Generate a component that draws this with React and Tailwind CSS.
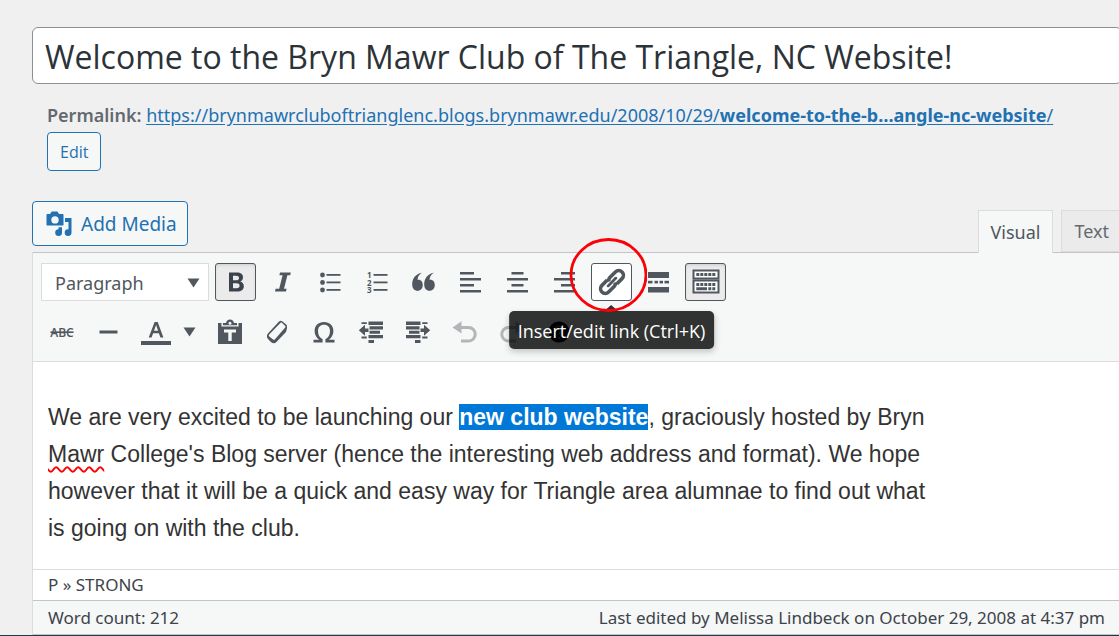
import React from "react";

const ui = "font-['Noto_Sans','Open_Sans',sans-serif]";
const toolBase = "flex h-[38px] w-[41px] shrink-0 items-center justify-center rounded-[3px] border";

function Tool({ label, variant = "plain", children }) {
  const look =
    variant === "pressed"
      ? "border-[#50575e] bg-[#ebebec] shadow-[inset_0_2px_5px_-3px_rgba(0,0,0,0.3)]"
      : variant === "hover"
        ? "border-[#50575e] bg-white"
        : "border-transparent";
  return (
    <button type="button" aria-label={label} aria-pressed={variant === "pressed"} className={`${toolBase} ${look}`}>
      {children}
    </button>
  );
}

function Icon({ children, className = "" }) {
  return (
    <svg viewBox="0 0 30 30" aria-hidden="true" className={`h-[30px] w-[30px] shrink-0 ${className}`} fill="currentColor">
      {children}
    </svg>
  );
}

const BoldIcon = () => (
  <Icon className="text-[#3c434a]">
    <path fillRule="evenodd" d="M8 5.500H15.500C20 5.500 22 7.300 22 10.300C22 12.500 20.900 14 19 14.600C21.500 15.100 22.800 16.900 22.800 19.200C22.800 22.700 20.200 24.500 16.200 24.500H8ZM12 8.700V13.200H15C17 13.200 18 12.400 18 10.900C18 9.400 17 8.700 15 8.700ZM12 16.300V21.300H15.500C17.600 21.300 18.600 20.400 18.600 18.800C18.600 17.100 17.600 16.300 15.400 16.300Z" />
  </Icon>
);
const ItalicIcon = () => (
  <Icon>
    <path d="M12 5.500H22.800L22.200 8.300H19.400L16 21.700H18.600L18 24.500H7L7.600 21.700H11.200L14.600 8.300H11.400Z" />
  </Icon>
);
const BulletIcon = () => (
  <Icon>
    {[8, 15.5, 23].map((y) => (
      <g key={y}>
        <circle cx="7.500" cy={y} r="2.4" />
        <rect x="11.500" y={y - 1} width="14" height="1.800" />
      </g>
    ))}
  </Icon>
);
const NumberIcon = () => (
  <Icon>
    {[8, 15.5, 23].map((y, i) => (
      <g key={y}>
        <text x="5" y={y + 3} fontSize="8" fontWeight="700" fontFamily="Open Sans, sans-serif">
          {i + 1}
        </text>
        <rect x="11.500" y={y - 1} width="14" height="1.800" />
      </g>
    ))}
  </Icon>
);
const QuoteIcon = () => (
  <Icon>
    <path d="M12.800 5.800C9.800 7.600 8.600 10 8.600 13C11.700 12.200 13.800 15 13.800 18C13.800 21.300 11.600 23.800 8.600 23.800C5.200 23.800 3.200 21.200 3.200 17.300C3.200 11.500 6.600 7 12.800 5.800Z" />
    <path transform="translate(12 0)" d="M12.800 5.800C9.800 7.600 8.600 10 8.600 13C11.700 12.200 13.800 15 13.800 18C13.800 21.300 11.600 23.800 8.600 23.800C5.200 23.800 3.200 21.200 3.200 17.300C3.200 11.500 6.600 7 12.800 5.800Z" />
  </Icon>
);
function AlignIcon({ x, width }) {
  return (
    <Icon>
      <rect x={x} y="5" width={width} height="2.500" />
      <rect x="4" y="11" width="21" height="2.500" />
      <rect x={x} y="17" width={width} height="2.500" />
      <rect x="4" y="23" width="21" height="2.500" />
    </Icon>
  );
}
const LinkIcon = () => (
  <Icon>
    <g transform="rotate(-45 15 15)" fill="none" stroke="currentColor" strokeWidth="3.600">
      <path d="M13 10.300H5.500A4.700 4.700 0 0 0 5.500 19.700H13A4.700 4.700 0 0 0 17 17.500" />
      <path d="M17 19.700H24.500A4.700 4.700 0 0 0 24.500 10.300H17A4.700 4.700 0 0 0 13 12.500" />
      <path d="M9.500 15H20.500" strokeWidth="2.800" strokeLinecap="round" />
    </g>
  </Icon>
);
const MoreIcon = () => (
  <Icon>
    <rect x="4" y="5" width="21" height="6" />
    <rect x="4" y="13.800" width="4.500" height="2.600" />
    <rect x="10.500" y="13.800" width="3.500" height="2.600" />
    <rect x="15.500" y="13.800" width="3.500" height="2.600" />
    <rect x="20.500" y="13.800" width="4.500" height="2.600" />
    <rect x="4" y="20" width="21" height="5.500" />
  </Icon>
);
const KeyboardIcon = () => (
  <Icon>
    <rect x="2.500" y="3.500" width="25" height="8" fill="white" stroke="currentColor" strokeWidth="2" />
    <rect x="2.500" y="13.500" width="25" height="12" fill="white" stroke="currentColor" strokeWidth="2" />
    {[5, 9, 13, 17, 21].map((x) => (
      <rect key={x} x={x + 0.3} y="6" width="3" height="3" />
    ))}
    {[5, 9, 13, 17, 21].map((x) => (
      <rect key={x} x={x + 0.3} y="16" width="3" height="3" />
    ))}
    <path d="M5.300 20.300H16V23.300H5.300ZM17.300 20.300H20.300V23.300H17.300ZM21.300 20.300H24.300V23.300H21.300Z" />
  </Icon>
);
const StrikeIcon = () => (
  <Icon>
    <text x="15" y="19.500" textAnchor="middle" fontSize="12" fontWeight="600" fontFamily="Open Sans, sans-serif">
      ABC
    </text>
    <rect x="3.500" y="14.400" width="23" height="1.600" />
  </Icon>
);
const RuleIcon = () => (
  <Icon>
    <rect x="5.500" y="13.500" width="18" height="3" />
  </Icon>
);
const ColorIcon = () => (
  <Icon>
    <path fillRule="evenodd" d="M13.600 5H16.700L22.400 20.500H19.400L17.900 16.300H12.100L10.600 20.500H7.700ZM15.100 7.900L13 13.800H17.100Z" />
    <rect x="0" y="24" width="30" height="4" />
  </Icon>
);
const PasteIcon = () => (
  <Icon>
    <path d="M3 6H6.500V9.500H23.500V6H27V27H3Z" />
    <path fillRule="evenodd" d="M8 8.300V6H11C11.400 3.900 12.900 2.600 15 2.600C17.100 2.600 18.600 3.900 19 6H22V8.300ZM15 4.700A1.500 1.500 0 1 0 15 7.700A1.500 1.500 0 1 0 15 4.700Z" />
    <path fill="#f6f7f7" d="M9 12.500H21V15.500H16.700V24H13.300V15.500H9Z" />
  </Icon>
);
const EraserIcon = () => (
  <Icon>
    <path fillRule="evenodd" d="M17 4.500C18 3.500 19.200 3.500 20.200 4.300L24.200 7.500C25.200 8.300 25.300 10.500 24.700 12.500L24 15L14.200 25.300C12.800 26.800 10.500 26.500 9.200 25.200L6 22C4.700 20.600 4.600 18.300 5.700 16.800ZM18.600 5.700L7.200 17.600C6.600 18.300 6.700 19 7.300 19.600L11 22.500C11.600 23 12.400 22.900 13 22.300L23.200 10.600C23.700 10 23.600 9.300 23 8.800L19.900 5.800C19.500 5.400 19 5.300 18.600 5.700Z" />
  </Icon>
);
const OmegaIcon = () => (
  <Icon>
    <path d="M4.500 22.800H10.300C7.500 20.800 5.600 17.900 5.600 14C5.600 8.500 9.300 5 15 5C20.700 5 24.400 8.500 24.400 14C24.400 17.900 22.500 20.800 19.700 22.800H25.500V25.500H16.400V22.300C19.500 20.700 21 17.900 21 14C21 10.100 18.900 7.700 15 7.700C11.100 7.700 9 10.100 9 14C9 17.900 10.500 20.700 13.600 22.300V25.500H4.500Z" />
  </Icon>
);
function IndentIcon({ flip = false }) {
  return (
    <Icon className={flip ? "-scale-x-100" : ""}>
      <path d="M12.500 4.600H27V8H12.500ZM13.500 9.300H27V12.400H13.500ZM13.500 13.700H24V16.800H13.500ZM12.500 18.100H27V21.300H12.500ZM12.500 23H18V26H12.500ZM5.500 5.200H10.800V7H5.500ZM5.500 19.600H10.800V21.400H5.500Z" />
      <path d="M2.800 13.200L9 7.800V11.500H12.500V15H9V18.700Z" />
    </Icon>
  );
}
function UndoIcon({ flip = false }) {
  return (
    <Icon className={flip ? "-scale-x-100 opacity-40" : "opacity-40"}>
      <path d="M2.500 10.500L11.500 4.300V16.500Z" />
      <path d="M10 10.500H18.700A6.500 6.700 0 0 1 18.700 24H11" fill="none" stroke="currentColor" strokeWidth="3" />
    </Icon>
  );
}
const HelpIcon = () => (
  <Icon className="text-black">
    <circle cx="15" cy="15" r="10.500" />
    <path d="M11.500 12.500A3.500 3 0 1 1 16.500 15Q15 16 15 17.500M15 20V22" fill="none" stroke="#50575e" strokeWidth="2" />
  </Icon>
);
const Caret = ({ className = "" }) => (
  <svg viewBox="0 0 13 10" aria-hidden="true" className={`h-[10px] w-[13px] ${className}`} fill="currentColor">
    <path d="M0.500 0.500H12.500L6.500 9.500Z" />
  </svg>
);
const MediaIcon = () => (
  <svg viewBox="0 0 28 28" aria-hidden="true" className="h-7 w-7 shrink-0" fill="currentColor">
    <path fillRule="evenodd" d="M2.500 4H5L6.800 1.500H12.500L14 4H17.500C18.200 4 18.500 4.300 18.500 5V14.500C18.500 15.200 18.200 15.500 17.500 15.500H2.500C1.800 15.500 1.500 15.200 1.500 14.500V5C1.500 4.300 1.800 4 2.500 4ZM10 6.200A3.700 3.700 0 1 0 10 13.600A3.700 3.700 0 1 0 10 6.200Z" />
    <path d="M20 8H26.500V22.500A3.400 3.400 0 1 1 23.500 19.200V12H20Z" />
    <path d="M13.500 17.200H17V22.500A3.400 3.400 0 1 1 13.500 19.200Z" />
  </svg>
);

export default function App() {
  return (
    <main className={`min-h-screen overflow-hidden bg-[#f0f0f1] pt-[27px] pl-8 text-[#3c434a] ${ui}`}>
      <div className="-mr-[3px]">
        <input
          aria-label="Title"
          defaultValue="Welcome to the Bryn Mawr Club of The Triangle, NC Website!"
          className="block h-[57px] w-full rounded-md border border-[#8c8f94] bg-white px-3 pt-[2px] font-['Open_Sans',sans-serif] text-[32px] text-[#2c3338] outline-none"
        />
      </div>

      <div className="mt-[18px] pl-[15px] text-[18px] leading-[26px] whitespace-nowrap">
        <strong className="font-semibold text-[#646970]">Permalink:</strong>{" "}
        <a href="#permalink" className="text-[#2271b1] underline underline-offset-2">
          https://brynmawrcluboftrianglenc.blogs.brynmawr.edu/2008/10/29/
          <span className="font-bold">welcome-to-the-b…angle-nc-website</span>/
        </a>
      </div>
      <div className="mt-1 pl-[15px]">
        <button
          type="button"
          className="block h-[39px] rounded border border-[#2271b1] bg-[#f6f7f7] px-3 font-['Open_Sans',sans-serif] text-[16px] text-[#2271b1]"
        >
          Edit
        </button>
      </div>

      <div className="mt-[30px] flex items-start justify-between">
        <button
          type="button"
          className="flex h-[45px] items-center gap-2 rounded border border-[#2271b1] bg-[#f6f7f7] pt-px pr-[10px] pl-3 text-[19px] text-[#2271b1]"
        >
          <MediaIcon />
          Add Media
        </button>
        <div className="mt-[9px] flex gap-2 text-[18px]">
          <button type="button" className="z-10 -mb-px h-[43px] border border-b-0 border-[#dcdcde] bg-[#f6f7f7] px-3 text-[#50575e]">
            Visual
          </button>
          <button type="button" className="h-[42px] border border-r-0 border-[#dcdcde] bg-[#ebebeb] pr-[10px] pl-3 text-[#646970]">
            Text
          </button>
        </div>
      </div>

      <section className="border-l border-[#dcdcde]">
        <div className="flex flex-col gap-3 border-y border-t-[#c3c4c7] border-b-[#dcdcde] bg-[#f6f7f7] py-[10px] pl-2 text-[#50575e]">
          <div className="flex gap-[6px]">
            <div className="relative w-[168px] shrink-0">
              <select
                aria-label="Block format"
                className="h-[38px] w-full appearance-none border border-[#dcdcde] bg-white pt-[2px] pl-[13px] text-[18px] outline-none"
              >
                <option>Paragraph</option>
              </select>
              <Caret className="pointer-events-none absolute top-[15px] right-[9px]" />
            </div>
            <Tool label="Bold" variant="pressed"><BoldIcon /></Tool>
            <Tool label="Italic"><ItalicIcon /></Tool>
            <Tool label="Bulleted list"><BulletIcon /></Tool>
            <Tool label="Numbered list"><NumberIcon /></Tool>
            <Tool label="Blockquote"><QuoteIcon /></Tool>
            <Tool label="Align left"><AlignIcon x={4} width={14} /></Tool>
            <Tool label="Align center"><AlignIcon x={8.5} width={12} /></Tool>
            <Tool label="Align right"><AlignIcon x={11} width={14} /></Tool>
            <div className="relative z-20 shrink-0">
              <Tool label="Insert/edit link" variant="hover"><LinkIcon /></Tool>
              <div role="tooltip" className="absolute top-full left-1/2 mt-[10px] -translate-x-1/2">
                <svg viewBox="0 0 16 7" aria-hidden="true" className="absolute -top-[6px] left-1/2 h-[7px] w-4 -translate-x-1/2" fill="#2f2f2f">
                  <path d="M0 7L8 0L16 7Z" />
                </svg>
                <div className="rounded-[5px] bg-black/80 px-[9px] pt-[2px] font-['Open_Sans',sans-serif] text-[18px] leading-9 whitespace-nowrap text-white shadow-[0_3px_6px_rgba(0,0,0,0.2)]">
                  Insert/edit link (Ctrl+K)
                </div>
              </div>
              <svg viewBox="0 0 78 74" aria-hidden="true" className="pointer-events-none absolute -top-[25px] -left-[22px] h-[74px] w-[78px] max-w-none" fill="none">
                <ellipse cx="39.500" cy="37" rx="37.500" ry="35.500" stroke="#fb0007" strokeWidth="2.800" />
              </svg>
            </div>
            <Tool label="Insert Read More tag"><MoreIcon /></Tool>
            <Tool label="Toolbar toggle" variant="pressed"><KeyboardIcon /></Tool>
          </div>
          <div className="flex gap-[6px]">
            <Tool label="Strikethrough"><StrikeIcon /></Tool>
            <Tool label="Horizontal line"><RuleIcon /></Tool>
            <div className="flex w-[68px] shrink-0">
              <Tool label="Text color"><ColorIcon /></Tool>
              <button type="button" aria-label="Choose text color" className="flex w-[27px] items-center justify-center">
                <Caret />
              </button>
            </div>
            <Tool label="Paste as text"><PasteIcon /></Tool>
            <Tool label="Clear formatting"><EraserIcon /></Tool>
            <Tool label="Special character"><OmegaIcon /></Tool>
            <Tool label="Decrease indent"><IndentIcon /></Tool>
            <Tool label="Increase indent"><IndentIcon flip /></Tool>
            <Tool label="Undo"><UndoIcon /></Tool>
            <Tool label="Redo"><UndoIcon flip /></Tool>
            <Tool label="Keyboard shortcuts"><HelpIcon /></Tool>
          </div>
        </div>

        <div className="bg-white pt-[37px] pb-[22px] pl-[15px] font-['Liberation_Sans',Arial,sans-serif] text-[23px] leading-[37px] text-[#333333]">
          <p className="max-w-[880px]">
            We are very excited to be launching our <strong className="bg-[#0078d7] text-white">new club website</strong>, graciously hosted by Bryn{" "}
            <span className="underline decoration-[#ff0000] decoration-wavy decoration-2 underline-offset-4">Mawr</span> College's Blog server (hence the
            interesting web address and format). We hope however that it will be a quick and easy way for Triangle area alumnae to find out what is going on
            with the club.
          </p>
        </div>

        <div className="border-t border-[#dcdcde] bg-white pl-[15px] text-[17px] leading-[30px]">P » STRONG</div>
        <footer className="flex justify-between border-y border-[#c3c4c7] bg-[#f6f7f7] pr-[14px] pl-[15px] text-[17px] leading-[33px]">
          <span>Word count: 212</span>
          <span>Last edited by Melissa Lindbeck on October 29, 2008 at 4:37 pm</span>
        </footer>
      </section>
      <div className="-ml-8 h-px bg-[#1f3d47]" />
    </main>
  );
}
